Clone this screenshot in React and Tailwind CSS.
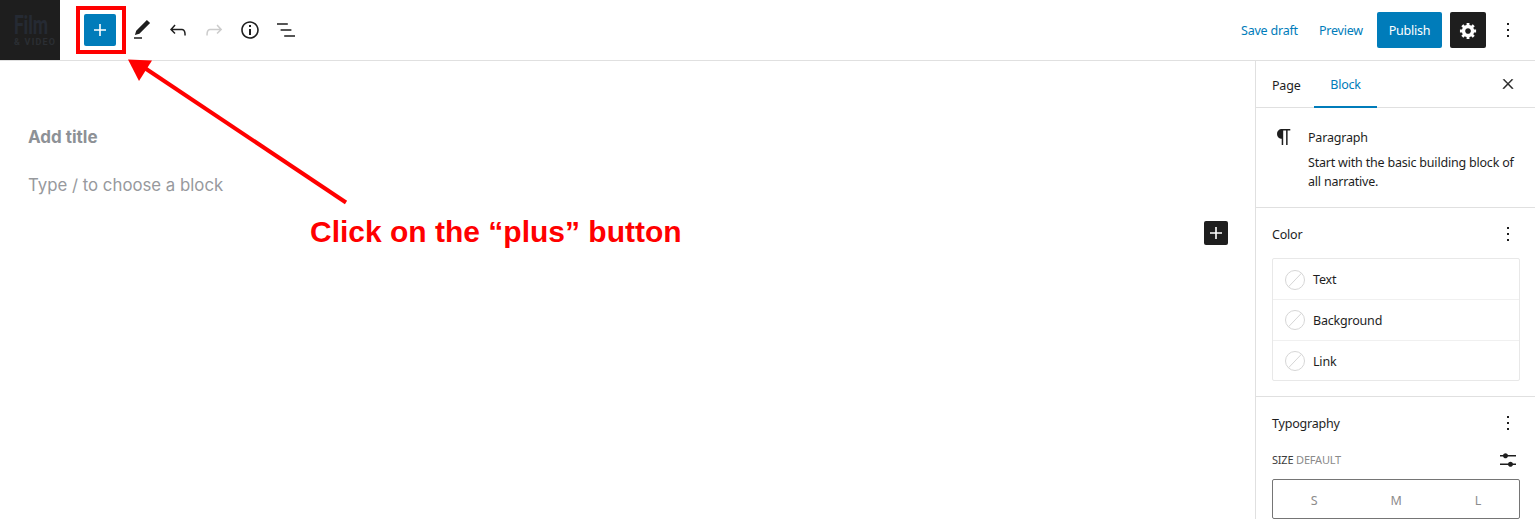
import React from 'react'

const sans = "font-['Noto_Sans','Open_Sans',sans-serif] tracking-[-0.2px]"

function Icon({ d, size = 24, box = 24, className = '' }) {
  return (
    <svg width={size} height={size} viewBox={`0 0 ${box} ${box}`} fill="currentColor" className={className}>
      <path d={d} />
    </svg>
  )
}

const paths = {
  plus: 'M18 11.2h-5.2V6h-1.6v5.2H6v1.6h5.2V18h1.6v-5.2H18z',
  pencil: 'M20.1 5.1L16.9 2 6.2 12.7l-1.3 4.4 4.5-1.3L20.1 5.1zM4 20.8h8v-1.5H4v1.5z',
  undo: 'M18.3 11.7c-.6-.6-1.4-.9-2.3-.9H6.7l2.9-3.3-1.1-1-4.5 5L8.5 16l1-1-2.7-2.7H16c.5 0 .9.2 1.3.5 1 1 1 3.4 1 4.5v.3h1.5v-.2c0-1.5 0-4.3-1.5-5.7z',
  redo: 'M15.6 6.5l-1.1 1 2.9 3.3H8c-.9 0-1.7.3-2.3.9-1.4 1.5-1.4 4.2-1.4 5.6v.2h1.5v-.3c0-1.1 0-3.5 1-4.5.3-.3.7-.5 1.3-.5h9.2L14.5 15l1.1 1.1 4.6-4.6-4.6-5z',
  info: 'M12 3.2c-4.8 0-8.8 3.9-8.8 8.8 0 4.8 3.9 8.8 8.8 8.8 4.8 0 8.8-3.9 8.8-8.8 0-4.8-4-8.8-8.8-8.8zm0 16c-4 0-7.2-3.3-7.2-7.2C4.8 8 8 4.8 12 4.8s7.2 3.3 7.2 7.2c0 4-3.2 7.2-7.2 7.2zM11 17h2v-6h-2v6zm0-8h2V7h-2v2z',
  list: 'M13.8 5.2H3v1.5h10.8V5.2zm-3.6 12v1.5H21v-1.5H10.2zm7.2-6H6.6v1.5h10.8v-1.5z',
  gear: 'M18 12h-2.18c-.17.7-.44 1.35-.81 1.93l1.54 1.54-2.1 2.1-1.54-1.54c-.58.36-1.23.63-1.91.79V19H8v-2.18c-.68-.16-1.33-.43-1.91-.79l-1.54 1.54-2.12-2.12 1.54-1.54c-.36-.58-.63-1.23-.79-1.91H1V9.03h2.17c.16-.7.44-1.35.8-1.94L2.43 5.55l2.1-2.1 1.54 1.54c.58-.37 1.24-.64 1.93-.81V2h3v2.18c.68.16 1.33.43 1.91.79l1.54-1.54 2.12 2.12-1.54 1.54c.36.59.64 1.24.8 1.94H18V12zm-8.5 1.5c1.66 0 3-1.34 3-3s-1.34-3-3-3-3 1.34-3 3 1.34 3 3 3z',
  more: 'M13 19h-2v-2h2v2zm0-6h-2v-2h2v2zm0-6h-2V5h2v2z',
  close: 'M13 11.8l6.1-6.3-1-1-6.1 6.2-6.1-6.2-1 1 6.1 6.3-6.5 6.7 1 1 6.5-6.6 6.5 6.6 1-1z',
  paragraph: 'M18.3 4H9.9v-.1l-.9.2c-2.3.4-4 2.4-4 4.8s1.7 4.4 4 4.8l.7.1V20h1.5V5.5h2.9V20h1.5V5.5h2.7V4z',
  sliders: 'M14.5 13.8c-1.1 0-2.1.7-2.4 1.8H4V17h8.1c.3 1 1.3 1.8 2.4 1.8s2.1-.7 2.4-1.8H20v-1.5h-3.1c-.3-1-1.3-1.7-2.4-1.7zM11.9 7c-.3-1-1.3-1.8-2.4-1.8S7.4 6 7.1 7H4v1.5h3.1c.3 1 1.3 1.8 2.4 1.8s2.1-.7 2.4-1.8H20V7h-8.1z',
}

function ToolButton({ d, className = 'text-[#1e1e1e]' }) {
  return (
    <div className={`flex h-9 w-9 items-center justify-center ${className}`}>
      <Icon d={d} />
    </div>
  )
}

function ColorRow({ label, className }) {
  return (
    <div className={`flex items-center gap-[8px] px-[12px] ${className}`}>
      <svg width="20" height="20" viewBox="0 0 20 20" fill="none" stroke="#d6d6d6">
        <circle cx="10" cy="10" r="9.5" />
        <path d="M3.5 16.8L16.5 3.2" />
      </svg>
      <span className="mt-[2px] text-[12.5px] text-[#1e1e1e]">{label}</span>
    </div>
  )
}

function Sidebar() {
  return (
    <aside className={`h-full w-[280px] shrink-0 overflow-hidden border-l border-[#e0e0e0] text-[#1e1e1e] ${sans}`}>
      <div className="flex h-[47px] items-center border-b border-[#e0e0e0] pr-[19px]">
        <div className="flex h-full w-[58px] items-center pl-[16px] pt-[4px] text-[12.5px]">Page</div>
        <div className="-mb-px flex h-[47px] w-[63px] items-center justify-center border-b-2 border-[#007cba] pt-[3px] text-[12.5px] text-[#007cba]">Block</div>
        <div className="ml-auto text-[#1e1e1e]">
          <Icon d={paths.close} size={16} className="stroke-current stroke-[0.8]" />
        </div>
      </div>
      <div className="flex h-[100px] gap-[12px] border-b border-[#e0e0e0] pl-[16px] pr-[14px] pt-[17px]">
        <Icon d={paths.paragraph} className="shrink-0" />
        <div className="text-[12.5px] leading-[19px]">
          <div className="mb-[6px] mt-[3px]">Paragraph</div>
          <div>Start with the basic building block of all narrative.</div>
        </div>
      </div>
      <div className="h-[189px] border-b border-[#e0e0e0] px-[16px] pr-[15px]">
        <div className="flex h-[50px] items-center justify-between pt-[2px]">
          <span className="mt-[2px] text-[12.5px]">Color</span>
          <Icon d={paths.more} />
        </div>
        <div className="w-[248px] rounded-[2px] border border-[#e8e8e8]">
          <ColorRow label="Text" className="h-[41px] border-b border-[#f0f0f0] pt-px" />
          <ColorRow label="Background" className="h-[41px] border-b border-[#f0f0f0]" />
          <ColorRow label="Link" className="h-[39px] pt-px" />
        </div>
      </div>
      <div className="px-[16px] pr-[15px]">
        <div className="flex h-[52px] items-center justify-between">
          <span className="mt-[2px] text-[12.5px]">Typography</span>
          <Icon d={paths.more} />
        </div>
        <div className="flex h-[22px] items-center justify-between">
          <span className="text-[11px] text-[#3c3c3c]">SIZE <span className="text-[#8a8a8a]">DEFAULT</span></span>
          <Icon d={paths.sliders} />
        </div>
        <div className="mt-[8px] flex h-[40px] w-[248px] items-center rounded-[2px] border border-[#757575] pt-[4px] text-[12.5px] text-[#8c8c8c]">
          <span className="flex-1 text-center">S</span>
          <span className="flex-1 text-center">M</span>
          <span className="flex-1 text-center">L</span>
        </div>
      </div>
    </aside>
  )
}

export default function App() {
  return (
    <div className="relative flex h-screen flex-col overflow-hidden bg-white">
      <header className={`flex h-[61px] shrink-0 items-center border-b border-[#e0e0e0] ${sans}`}>
        <div className="flex h-[60px] w-[60px] shrink-0 flex-col items-start overflow-hidden bg-[#1e1e1e] pl-[14px] pt-[14px] text-[#252a33]">
          <span className="origin-left scale-x-[0.71] font-['Roboto',sans-serif] text-[25px] font-bold leading-[24px]">Film</span>
          <span className="whitespace-nowrap font-['Roboto',sans-serif] text-[9px] font-bold leading-[8px] tracking-[1.2px] text-[#2b2e33]">&amp; VIDEO</span>
        </div>
        <div className="ml-[24px] mr-[8px] flex h-8 w-8 items-center justify-center rounded-[2px] bg-[#007cba] text-white">
          <Icon d={paths.plus} />
        </div>
        <ToolButton d={paths.pencil} />
        <ToolButton d={paths.undo} />
        <ToolButton d={paths.redo} className="text-[#cccccc]" />
        <ToolButton d={paths.info} />
        <ToolButton d={paths.list} />
        <div className="ml-auto flex items-center pr-[15px] text-[12.5px] text-[#007cba]">
          <span className="pt-[3px]">Save draft</span>
          <span className="ml-[21px] pt-[3px]">Preview</span>
          <div className="ml-[14px] flex h-9 w-[65px] items-center justify-center rounded-[2px] bg-[#007cba] pt-[3px] text-white">Publish</div>
          <div className="ml-[8px] flex h-9 w-9 items-center justify-center rounded-[2px] bg-[#1e1e1e] text-white">
            <Icon d={paths.gear} size={19} box={20} />
          </div>
          <div className="ml-[10px] text-[#1e1e1e]">
            <Icon d={paths.more} />
          </div>
        </div>
      </header>

      <main className="flex min-h-0 flex-1">
        <div className="flex-1 pl-[28px] pr-[27px] pt-[64px] font-['Inter',sans-serif]">
          <div className="text-[17px] font-bold leading-[24px] text-[#8d9196]">Add title</div>
          <div className="mt-[24px] text-[16.8px] leading-[24px] text-[#97999d]">Type / to choose a block</div>
          <div className="ml-auto mt-[24px] flex h-6 w-6 items-center justify-center rounded-[2px] bg-[#1e1e1e] text-white">
            <Icon d={paths.plus} />
          </div>
        </div>
        <Sidebar />
      </main>

      {/* tutorial annotation on top of the editor */}
      <div className="absolute left-[76px] top-[6px] h-[48px] w-[50px] border-[4px] border-[#ff0000]" />
      <svg className="absolute left-[120px] top-[50px]" width="240" height="160" viewBox="0 0 240 160" fill="#ff0000">
        <path d="M226 152.5L24 17.5" stroke="#ff0000" strokeWidth="4" />
        <path d="M8 9.5L32 10.5L19 31z" />
      </svg>
      <div className="absolute left-[310px] top-[214px] whitespace-nowrap font-['Liberation_Sans',sans-serif] text-[30px] font-bold leading-[36px] text-[#ff0000]">
        Click on the “plus” button
      </div>
    </div>
  )
}
